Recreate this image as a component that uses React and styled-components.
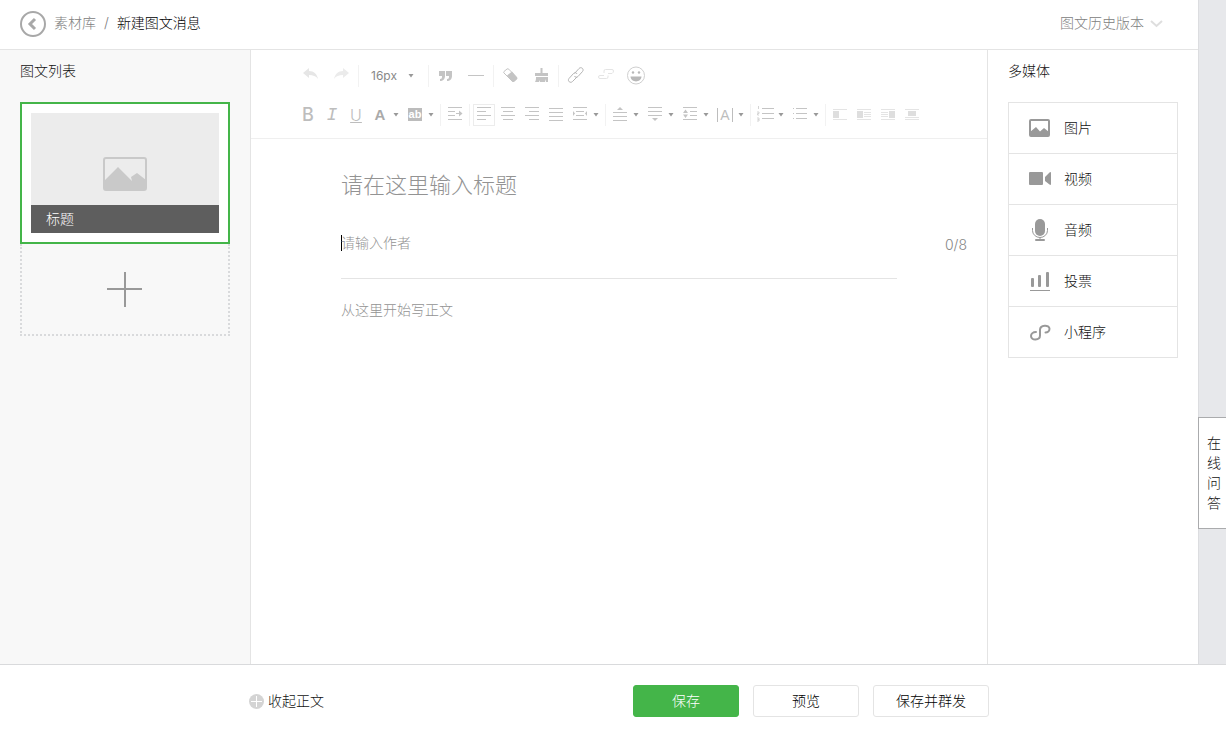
import React from 'react'
import styled, { createGlobalStyle } from 'styled-components'

const GlobalStyle = createGlobalStyle`
  * {
    box-sizing: border-box;
  }

  body {
    margin: 0;
    background: #e7e8eb;
    color: #111;
    font-family: "Inter", "Noto Sans CJK SC", sans-serif;
    font-size: 14px;
    font-weight: 300;
    line-height: 20px;
  }

  button,
  input,
  select,
  textarea {
    margin: 0;
    padding: 0;
    border: 0;
    background: transparent;
    color: inherit;
    font: inherit;
    outline: none;
  }

  a {
    color: inherit;
    text-decoration: none;
  }

  svg {
    display: block;
    flex: none;
  }
`

const Page = styled.div`
  display: flex;
  flex-direction: column;
  min-height: 100vh;
`

const Main = styled.div`
  display: flex;
  flex-direction: column;
  flex: 1;
  margin-right: 27px;
  border-right: 1px solid #dcdde0;
  background: #fff;
`

const Header = styled.header`
  display: flex;
  align-items: center;
  justify-content: space-between;
  height: 50px;
  padding: 0 35px 3px 20px;
  border-bottom: 1px solid #e4e4e4;
`

const Breadcrumb = styled.nav`
  display: flex;
  align-items: center;
  gap: 8px;
  color: #808080;
`

const BackButton = styled.button`
  margin-top: 2px;
`

const Current = styled.span`
  color: #000;
`

const HistoryButton = styled.button`
  display: flex;
  align-items: center;
  gap: 6px;
  color: #808080;
`

const Columns = styled.div`
  display: flex;
  flex: 1;
`

const Sidebar = styled.aside`
  width: ${(props) => (props.$side === 'left' ? 251 : 211)}px;
  padding: 11px 20px 0;
  background: ${(props) => (props.$side === 'left' ? '#f8f8f8' : '#fff')};
  border: 0 solid #e4e4e4;
  border-width: ${(props) => (props.$side === 'left' ? '0 1px 0 0' : '0 0 0 1px')};
`

const SideTitle = styled.h2`
  margin: 0 0 21px;
  font-size: 14px;
  font-weight: 300;
`

const Card = styled.div`
  padding: 9px;
  border: 2px solid #44b549;
  background: #fff;
`

const Cover = styled.div`
  display: flex;
  flex-direction: column;
  align-items: center;
  justify-content: flex-end;
  gap: 14px;
  height: 120px;
  background: #ececec;
`

const CoverTitle = styled.div`
  align-self: stretch;
  padding: 4px 15px;
  background: #5e5e5e;
  color: #fff;
`

const AddCard = styled.button`
  display: flex;
  align-items: center;
  justify-content: center;
  width: 100%;
  height: 92px;
  border: 2px dotted #d9dadc;
  border-top: 0;
`

const Editor = styled.main`
  flex: 1;
  min-width: 0;
`

const Toolbar = styled.div`
  padding: 6px 45px 4px;
  border-bottom: 1px solid #efefef;
`

const ToolRow = styled.div`
  display: flex;
  align-items: center;
  height: 39px;
`

const Tool = styled.button`
  display: flex;
  align-items: center;
  justify-content: ${(props) => (props.$menu ? 'flex-start' : 'center')};
  flex: none;
  gap: 3px;
  width: ${(props) => (props.$wide ? 30 : props.$menu ? 35 : 24)}px;
  height: 24px;
  padding-left: ${(props) => (props.$menu ? 2 : 0)}px;
`

const ActiveTool = styled(Tool)`
  width: 22px;
  height: 22px;
  margin: 0 1px;
  border: 1px solid #ececec;
`

const Letter = styled.span`
  width: 20px;
  color: ${(props) => props.$color || '#bdbdbd'};
  font-family: ${(props) => props.$family || '"Liberation Sans"'}, sans-serif;
  font-size: ${(props) => props.$size || 18}px;
  font-style: ${(props) => (props.$italic ? 'italic' : 'normal')};
  font-weight: ${(props) => props.$weight || 400};
  text-align: center;
  text-decoration: ${(props) => (props.$underline ? 'underline' : 'none')};
`

const Marker = styled.span`
  width: 14px;
  height: 13px;
  margin: 0 3px;
  background: #bcbcbc;
  color: #fff;
  font-family: "Liberation Sans", sans-serif;
  font-size: 11px;
  font-weight: 700;
  line-height: 12px;
  text-align: center;
`

const SpacedLetter = styled.span`
  width: 16px;
  height: 14px;
  margin: 0 2px;
  border: 1px solid #bdbdbd;
  border-width: 0 1px;
  color: #bdbdbd;
  font-family: "Liberation Sans", sans-serif;
  font-size: 14px;
  line-height: 14px;
  text-align: center;
`

const Separator = styled.span`
  flex: none;
  width: 1px;
  height: 22px;
  margin: 0 2px;
  background: #f2f2f2;
`

const SizePicker = styled.label`
  display: flex;
  align-items: center;
  flex: none;
  width: 65px;
  padding-left: 10px;
`

const SizeSelect = styled.select`
  width: 37px;
  color: #888;
  font-size: 12px;
  font-weight: 400;
  appearance: none;
`

const Form = styled.form`
  padding: 31px 20px 0 90px;
`

const TitleInput = styled.input`
  display: block;
  width: 100%;
  height: 30px;
  font-size: 22px;
  line-height: 30px;

  &::placeholder {
    color: #939393;
    opacity: 1;
  }
`

const AuthorRow = styled.div`
  display: flex;
  margin-top: 22px;
`

const AuthorField = styled.div`
  display: flex;
  flex: 1;
  height: 57px;
  padding-top: 11px;
  border-bottom: 1px solid #e4e4e4;
`

const Cursor = styled.span`
  width: 1px;
  height: 16px;
  margin: 2px -1px 0 0;
  background: #000;
`

const AuthorInput = styled.input`
  flex: 1;
  height: 20px;

  &::placeholder {
    color: #939393;
    opacity: 1;
  }
`

const Counter = styled.span`
  width: 70px;
  padding-top: 13px;
  color: #858585;
  text-align: right;
`

const BodyInput = styled.textarea`
  display: block;
  width: 100%;
  height: 300px;
  margin-top: 21px;
  resize: none;

  &::placeholder {
    color: #939393;
    opacity: 1;
  }
`

const MediaList = styled.ul`
  margin: 0;
  padding: 0;
  border: 1px solid #e4e4e4;
  list-style: none;
`

const MediaItem = styled.li`
  & + & {
    border-top: 1px solid #e4e4e4;
  }
`

const MediaButton = styled.button`
  display: flex;
  align-items: center;
  gap: 12px;
  width: 100%;
  height: 50px;
  padding-left: 19px;
`

const Footer = styled.footer`
  display: flex;
  align-items: center;
  justify-content: space-between;
  height: 67px;
  padding: 6px 237px 0 249px;
  border-top: 1px solid #d9dadc;
  background: #fff;
`

const Toggle = styled.button`
  display: flex;
  align-items: center;
  gap: 4px;
`

const Actions = styled.div`
  display: flex;
  gap: 14px;
`

const ActionButton = styled.button`
  min-width: 106px;
  height: 32px;
  padding: 0 22px;
  border: 1px solid ${(props) => (props.$primary ? '#44b549' : '#e4e4e4')};
  border-radius: 3px;
  background: ${(props) => (props.$primary ? '#44b549' : '#fff')};
  color: ${(props) => (props.$primary ? '#fff' : '#000')};
`

// floats over the right edge of the window
const Help = styled.a`
  position: fixed;
  right: 0;
  bottom: 202px;
  width: 28px;
  padding: 15px 5px 15px 8px;
  border: 1px solid #aaabad;
  border-right: 0;
  background: #fff;
  word-break: break-all;
`

const Caret = () => (
  <svg width={'6'} height={'5'} viewBox={'0 0 6 5'}>
    <path d={'M0.5 1h5L3 4.5z'} fill={'#999'} />
  </svg>
)

const Icon = ({ children, color = '#c4c4c4' }) => (
  <svg width={'20'} height={'21'} viewBox={'0 0 20 21'} fill={'none'} stroke={color}>
    {children}
  </svg>
)

const fill = (d, color = '#c4c4c4') => <path d={d} fill={color} stroke={'none'} />

const icons = {
  undo: fill('M2 8l6-5v3c5 0 8 3 9 8-2-3-5-4-9-4v3z', '#e6e6e6'),
  redo: fill('M18 8l-6-5v3c-5 0-8 3-9 8 2-3 5-4 9-4v3z', '#ebebeb'),
  quote: fill('M3 6h6v5c0 3-2 5-5 5v-2c2 0 2-1 2-3H3zM10 6h6v5c0 3-2 5-5 5v-2c2 0 2-1 2-3h-3z'),
  rule: <path d={'M2 10.5h16'} />,
  eraser: (
    <>
      <path d={'M3 6.5l3-2.500q1-.6 1.800.2l7.700 8q.8 1-.2 2l-2.300 2q-1 .8-2-.2l-8-8q-.8-.8 0-1.500z'} />
      {fill('M6 10.5l5-4 5 6q.7 1-.3 2l-2.600 2.200q-1 .6-2-.2z')}
    </>
  ),
  brush: (
    <>
      {fill('M9.5 3h2v5H17v3H4V8h5.500zM5 12h12v5h-2v-3l-1 3H9v-2l-1 2H4c1-2 1-3 1-5z')}
    </>
  ),
  link: (
    <>
      <path d={'M8.5 8.500L13 3.500c2-2.200 5.500.5 3.500 3l-4.500 5c-1.200 1.200-3 1-3.500-.5'} stroke={'#b4b4b4'} />
      <path d={'M11 12l-4.500 4.500c-2 2.200-5.500-.5-3.500-3l4.500-5c1.200-1.200 3-1 3.500.5'} stroke={'#b4b4b4'} />
    </>
  ),
  unlink: (
    <path d={'M8 8V6q0-1.500 1.500-1.500H16q1.500 0 1.500 1.500T16 8.500h-4M12 10.500v1.500q0 1.500-1.500 1.500H4q-1.500 0-1.500-1.500T4 10.500h4'} stroke={'#e4e4e4'} />
  ),
  smile: (
    <>
      <circle cx={'10'} cy={'10.5'} r={'8.5'} stroke={'#cfcfcf'} />
      {fill('M4.500 11.500h11c-.5 6.500-10.500 6.500-11 0z', '#b8b8b8')}
      <circle cx={'7'} cy={'7.5'} r={'1.2'} fill={'#b8b8b8'} stroke={'none'} />
      <circle cx={'13'} cy={'7.5'} r={'1.2'} fill={'#b8b8b8'} stroke={'none'} />
    </>
  ),
  indent: (
    <>
      <path d={'M3 3.5h14M3 7.5h7M3 11.5h7M3 15.5h14M11 9.5h4'} />
      {fill('M14 6.500l3.500 3-3.500 3z')}
    </>
  ),
  left: <path d={'M3 3.5h14M3 7.5h9M3 11.5h14M3 15.5h9'} />,
  center: <path d={'M3 3.5h14M5 7.5h10M3 11.5h14M5 15.5h10'} />,
  right: <path d={'M3 3.5h14M7 7.5h10M3 11.5h14M7 15.5h10'} />,
  justify: <path d={'M3 4.5h14M3 8.5h14M3 12.5h14M3 16.5h14'} />,
  sides: (
    <>
      <path d={'M3 3.5h14M6 7.5h8M6 11.5h8M3 15.5h14'} />
      {fill('M3 7v5l2-2.500zM17 7v5l-2-2.500z')}
    </>
  ),
  before: (
    <>
      <path d={'M3 8.5h14M3 12.5h14M3 16.5h14'} />
      {fill('M7 6l3-3 3 3z')}
    </>
  ),
  after: (
    <>
      <path d={'M3 3.5h14M3 7.5h14M3 11.5h14'} />
      {fill('M7 14l3 3 3-3z')}
    </>
  ),
  lineHeight: (
    <>
      <path d={'M3 3.5h14M10 7.5h7M10 11.5h7M3 15.5h14'} />
      {fill('M3 9l2.500-3.500L8 9zM3 10.500l2.500 3.500 2.500-3.500z')}
    </>
  ),
  ordered: (
    <>
      <path d={'M7 4.5h12M7 9.5h12M7 14.5h12'} />
      <path d={'M3.5 2v3M2 8h2v1.500H2.500V11H4M2 14h2v3H2M2.500 15.500H4'} stroke={'#d4d4d4'} />
    </>
  ),
  bullets: (
    <>
      <path d={'M6 4.5h11M6 9.5h11M6 14.5h11'} />
      <path d={'M3 4.5h1M3 9.5h1M3 14.5h1'} />
    </>
  ),
  floatA: (
    <>
      <path d={'M3 5.5h14M3 15.5h14'} stroke={'#e4e4e4'} />
      {fill('M3 7h6v7H3z', '#dedede')}
    </>
  ),
  floatB: (
    <>
      <path d={'M3 5.5h14M3 15.5h14M10 8.5h7M10 10.5h7M10 12.5h7'} stroke={'#e4e4e4'} />
      {fill('M3 7h6v7H3z', '#dedede')}
    </>
  ),
  floatC: (
    <>
      <path d={'M3 5.5h14M3 15.5h14M3 8.5h7M3 10.5h7M3 12.5h7'} stroke={'#e4e4e4'} />
      {fill('M11 7h6v7h-6z', '#dedede')}
    </>
  ),
  floatD: (
    <>
      <path d={'M3 5.5h14M3 15.5h14M3 13.5h14'} stroke={'#e4e4e4'} />
      {fill('M6 7h8v5H6z', '#dedede')}
    </>
  )
}

const mediaIcons = {
  image: (
    <>
      <rect x={'2'} y={'4'} width={'19'} height={'16'} rx={'1'} fill={'none'} stroke={'#999'} strokeWidth={'2'} />
      <path d={'M2 16l6-5 4 4.500 4-3.500 5 4v4H2z'} />
    </>
  ),
  video: <path d={'M2 5h12q1 0 1 1v11q0 1-1 1H2q-1 0-1-1V6q0-1 1-1zM17 10l4.500-4.500q1.500-1 1.500.5v11q0 1.500-1.500.5L17 14z'} />,
  audio: (
    <>
      <rect x={'7'} y={'1'} width={'10'} height={'17'} rx={'5'} />
      <path d={'M4.5 10v2.500a7.500 7 0 0 0 15 0V10M12 19.500V22'} fill={'none'} stroke={'#999'} />
      <rect x={'7'} y={'21'} width={'10'} height={'2'} rx={'1'} />
    </>
  ),
  vote: (
    <>
      <rect x={'3'} y={'9'} width={'3'} height={'9'} rx={'1'} />
      <rect x={'10'} y={'6'} width={'3'} height={'12'} rx={'1'} />
      <rect x={'18'} y={'3'} width={'3'} height={'15'} rx={'1'} />
      <rect x={'2'} y={'21'} width={'20'} height={'1'} />
    </>
  ),
  program: (
    <path
      d={'M8 12c-3 0-5 1.800-5 4 0 5 9 4.500 9-.5V10c0-5.500 9.500-5.500 9.500-1.200 0 2.200-1.800 3.700-4 3.700'}
      fill={'none'}
      stroke={'#999'}
      strokeWidth={'2'}
      strokeLinecap={'round'}
    />
  )
}

const media = [
  { icon: 'image', label: '图片' },
  { icon: 'video', label: '视频' },
  { icon: 'audio', label: '音频' },
  { icon: 'vote', label: '投票' },
  { icon: 'program', label: '小程序' }
]

const IconTool = ({ name, wide, menu }) => (
  <Tool type={'button'} aria-label={name} $wide={wide} $menu={menu}>
    <Icon>{icons[name]}</Icon>
    {menu && <Caret />}
  </Tool>
)

const EditorToolbar = () => (
  <Toolbar>
    <ToolRow>
      <IconTool name={'undo'} wide />
      <IconTool name={'redo'} wide />
      <Separator />
      <SizePicker>
        <SizeSelect aria-label={'font size'} defaultValue={'16px'}>
          <option>14px</option>
          <option>16px</option>
          <option>18px</option>
        </SizeSelect>
        <Caret />
      </SizePicker>
      <Separator />
      <IconTool name={'quote'} wide />
      <IconTool name={'rule'} wide />
      <Separator />
      <IconTool name={'eraser'} wide />
      <IconTool name={'brush'} wide />
      <Separator />
      <IconTool name={'link'} wide />
      <IconTool name={'unlink'} wide />
      <IconTool name={'smile'} wide />
    </ToolRow>
    <ToolRow>
      <Tool type={'button'}><Letter $weight={500} $family={'"Inter"'}>B</Letter></Tool>
      <Tool type={'button'}><Letter $italic $family={'"Liberation Mono"'}>I</Letter></Tool>
      <Tool type={'button'}><Letter $size={16} $weight={300} $family={'"Inter"'} $underline>U</Letter></Tool>
      <Tool type={'button'} $menu>
        <Letter $weight={700} $size={15} $color={'#aaa'}>A</Letter>
        <Caret />
      </Tool>
      <Tool type={'button'} $menu>
        <Marker>ab</Marker>
        <Caret />
      </Tool>
      <Separator />
      <IconTool name={'indent'} />
      <Separator />
      <ActiveTool type={'button'} aria-label={'left'}>
        <Icon>{icons.left}</Icon>
      </ActiveTool>
      <IconTool name={'center'} />
      <IconTool name={'right'} />
      <IconTool name={'justify'} />
      <IconTool name={'sides'} menu />
      <Separator />
      <IconTool name={'before'} menu />
      <IconTool name={'after'} menu />
      <IconTool name={'lineHeight'} menu />
      <Tool type={'button'} $menu>
        <SpacedLetter>A</SpacedLetter>
        <Caret />
      </Tool>
      <Separator />
      <IconTool name={'ordered'} menu />
      <IconTool name={'bullets'} menu />
      <Separator />
      <IconTool name={'floatA'} />
      <IconTool name={'floatB'} />
      <IconTool name={'floatC'} />
      <IconTool name={'floatD'} />
    </ToolRow>
  </Toolbar>
)

const App = () => {
  const [author, setAuthor] = React.useState('')

  return (
    <Page>
      <GlobalStyle />
      <Main>
        <Header>
          <Breadcrumb>
            <BackButton type={'button'} aria-label={'back'}>
              <svg width={'26'} height={'26'} viewBox={'0 0 26 26'} fill={'none'} stroke={'#a8a8a8'}>
                <circle cx={'13'} cy={'13'} r={'12'} strokeWidth={'2'} />
                <path d={'M15 8l-5 5 5 5'} strokeWidth={'3'} />
              </svg>
            </BackButton>
            <a href={'#library'}>素材库</a>
            <span>/</span>
            <Current>新建图文消息</Current>
          </Breadcrumb>
          <HistoryButton type={'button'}>
            图文历史版本
            <svg width={'13'} height={'9'} viewBox={'0 0 13 9'} fill={'none'} stroke={'#dedede'} strokeWidth={'2'}>
              <path d={'M1 2l5.500 5L12 2'} />
            </svg>
          </HistoryButton>
        </Header>
        <Columns>
          <Sidebar $side={'left'}>
            <SideTitle>图文列表</SideTitle>
            <Card>
              <Cover>
                <svg width={'44'} height={'34'} viewBox={'0 0 44 34'}>
                  <rect x={'1'} y={'1'} width={'42'} height={'32'} rx={'2'} fill={'none'} stroke={'#c9c9c9'} strokeWidth={'2'} />
                  <path d={'M2 23l13-13 14 14-1-4 6-4 9 7v10H2z'} fill={'#c9c9c9'} />
                </svg>
                <CoverTitle>标题</CoverTitle>
              </Cover>
            </Card>
            <AddCard type={'button'} aria-label={'add'}>
              <svg width={'36'} height={'36'} viewBox={'0 0 36 36'} stroke={'#999'} strokeWidth={'2'}>
                <path d={'M0 18h35M18 1v35'} />
              </svg>
            </AddCard>
          </Sidebar>
          <Editor>
            <EditorToolbar />
            <Form onSubmit={(e) => e.preventDefault()}>
              <TitleInput aria-label={'title'} placeholder={'请在这里输入标题'} />
              <AuthorRow>
                <AuthorField>
                  <Cursor />
                  <AuthorInput
                    aria-label={'author'}
                    placeholder={'请输入作者'}
                    maxLength={8}
                    value={author}
                    onChange={(e) => setAuthor(e.target.value)}
                  />
                </AuthorField>
                <Counter>{author.length}/8</Counter>
              </AuthorRow>
              <BodyInput aria-label={'content'} placeholder={'从这里开始写正文'} />
            </Form>
          </Editor>
          <Sidebar $side={'right'}>
            <SideTitle>多媒体</SideTitle>
            <MediaList>
              {media.map(({ icon, label }) => (
                <MediaItem key={icon}>
                  <MediaButton type={'button'}>
                    <svg width={'24'} height={'24'} viewBox={'0 0 24 24'} fill={'#999'}>
                      {mediaIcons[icon]}
                    </svg>
                    {label}
                  </MediaButton>
                </MediaItem>
              ))}
            </MediaList>
          </Sidebar>
        </Columns>
      </Main>
      <Footer>
        <Toggle type={'button'}>
          <svg width={'15'} height={'15'} viewBox={'0 0 15 15'}>
            <circle cx={'7.5'} cy={'7.5'} r={'7.5'} fill={'#d4d4d4'} />
            <path d={'M2 7.5h11M7.5 2v11'} stroke={'#fff'} />
          </svg>
          收起正文
        </Toggle>
        <Actions>
          <ActionButton type={'button'} $primary>保存</ActionButton>
          <ActionButton type={'button'}>预览</ActionButton>
          <ActionButton type={'button'}>保存并群发</ActionButton>
        </Actions>
      </Footer>
      <Help href={'#help'}>在线问答</Help>
    </Page>
  )
}

export default App
